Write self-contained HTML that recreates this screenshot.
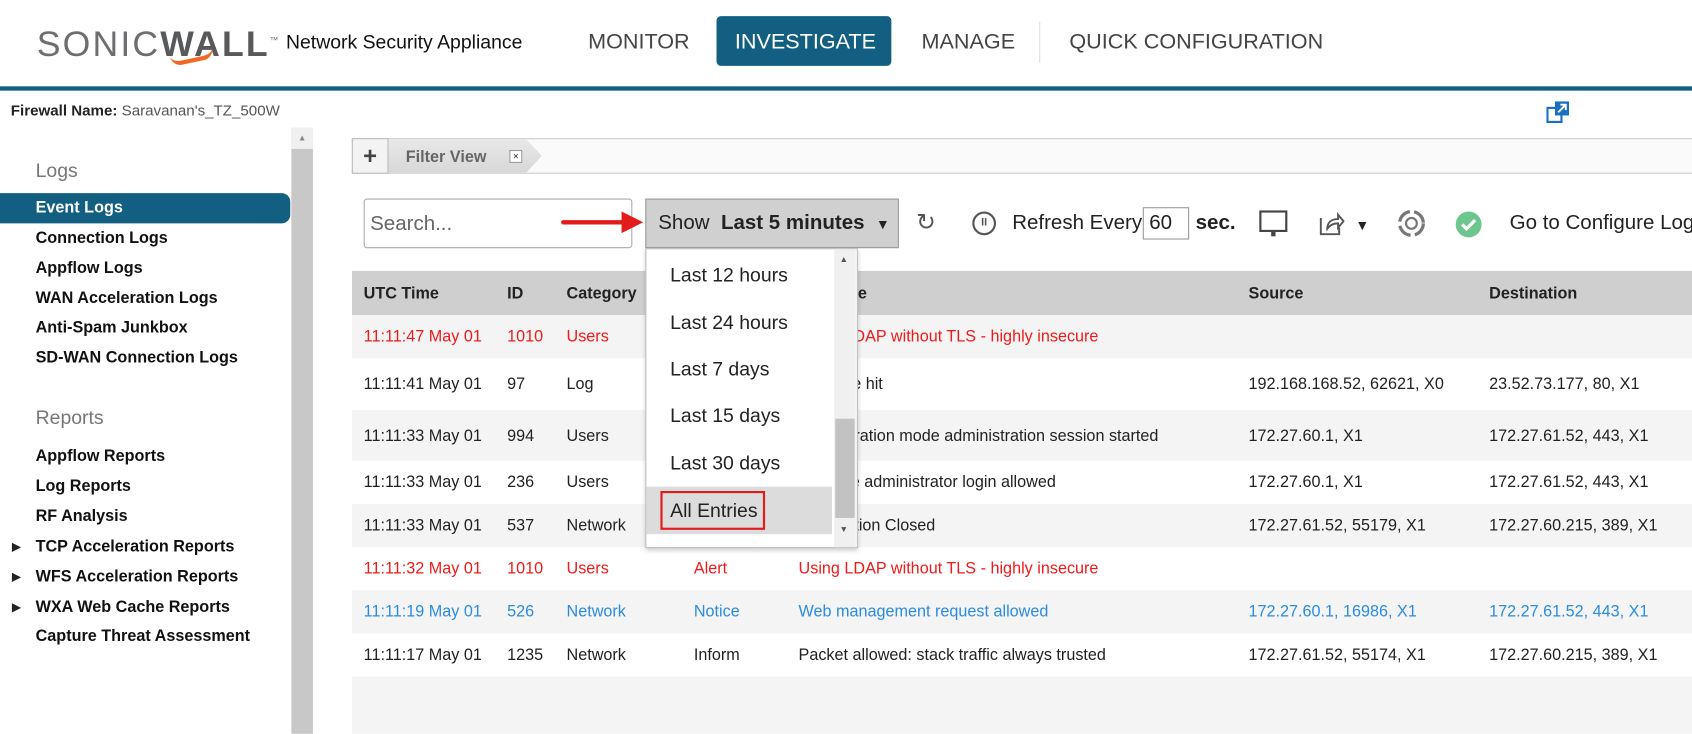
<!DOCTYPE html>
<html><head><meta charset="utf-8"><style>
*{margin:0;padding:0;box-sizing:border-box}
html,body{width:1692px;height:680px;overflow:hidden;background:#fff}
#w{position:absolute;left:0;top:0;width:1568px;height:631px;transform:scale(1.0791);transform-origin:0 0;font-family:"Liberation Sans",sans-serif;color:#222}
.a{position:absolute;white-space:nowrap}
.nav{font-size:20px;color:#444;top:28px}
.side{font-size:15px;font-weight:bold;left:33px;color:#111}
.row{position:absolute;left:326px;width:1242px;font-size:15px}
.row span{position:absolute;top:50%;transform:translateY(-50%);white-space:nowrap}
.red{color:#f01a1a}.blue{color:#2b8ce0}
.dd{font-size:18px;left:621px;color:#222}
</style></head><body><div id="w">
<div class="a" style="left:34px;top:22px;font-size:33px;letter-spacing:2px;color:#6d6e70">SONIC<b style="color:#58595b">WALL</b><sup style="font-size:8px">™</sup></div>
<div class="a" style="left:158px;top:48px;width:40px;height:10px;border-bottom:4px solid #f26722;border-radius:0 0 30px 30px;transform:rotate(-12deg)"></div>
<div class="a" style="left:265px;top:29px;font-size:18px;color:#111">Network Security Appliance</div>
<div class="a nav" style="left:545px">MONITOR</div>
<div class="a" style="left:664px;top:15px;width:162px;height:46px;background:#135f82;border-radius:4px"></div>
<div class="a nav" style="left:681px;color:#fff">INVESTIGATE</div>
<div class="a nav" style="left:854px">MANAGE</div>
<div class="a" style="left:963px;top:20px;width:1px;height:38px;background:#ddd"></div>
<div class="a nav" style="left:991px">QUICK CONFIGURATION</div>
<div class="a" style="left:0;top:80px;width:1568px;height:4px;background:#135f82"></div>
<div class="a" style="left:10px;top:94px;font-size:14px"><b>Firewall Name:</b> <span style="color:#555">Saravanan's_TZ_500W</span></div>
<svg class="a" style="left:1433px;top:93px" width="22" height="22" viewBox="0 0 22 22"><rect x="1" y="7" width="13" height="13" fill="none" stroke="#1a6fc4" stroke-width="2"/><rect x="8" y="1" width="13" height="13" fill="#1a6fc4"/><path d="M11 11l7-7M13 4h5v5" stroke="#fff" stroke-width="1.8" fill="none"/></svg>
<div class="a" style="left:270px;top:118px;width:20px;height:562px;background:#c8c8c8"></div>
<div class="a" style="left:270px;top:118px;width:20px;height:20px;background:#f0f0f0;font-size:8px;color:#888;text-align:center;line-height:20px">▲</div>
<div class="a" style="left:33px;top:148px;font-size:18px;color:#777">Logs</div>
<div class="a" style="left:0;top:179px;width:269px;height:28px;background:#135f82;border-radius:0 8px 8px 0"></div>
<div class="a side" style="top:184px;color:#fff">Event Logs</div>
<div class="a side" style="top:212px">Connection Logs</div>
<div class="a side" style="top:240px">Appflow Logs</div>
<div class="a side" style="top:268px">WAN Acceleration Logs</div>
<div class="a side" style="top:295px">Anti-Spam Junkbox</div>
<div class="a side" style="top:323px">SD-WAN Connection Logs</div>
<div class="a" style="left:33px;top:377px;font-size:18px;color:#777">Reports</div>
<div class="a side" style="top:414px">Appflow Reports</div>
<div class="a side" style="top:442px">Log Reports</div>
<div class="a side" style="top:470px">RF Analysis</div>
<div class="a side" style="top:498px">TCP Acceleration Reports</div>
<div class="a side" style="top:526px">WFS Acceleration Reports</div>
<div class="a side" style="top:554px">WXA Web Cache Reports</div>
<div class="a side" style="top:581px">Capture Threat Assessment</div>
<div class="a" style="left:11px;top:500px;font-size:11px">▶</div>
<div class="a" style="left:11px;top:528px;font-size:11px">▶</div>
<div class="a" style="left:11px;top:556px;font-size:11px">▶</div>
<div class="a" style="left:326px;top:128px;width:1242px;height:33px;border:1px solid #ccc;border-right:none;background:#fafafa"></div>
<div class="a" style="left:326px;top:128px;width:34px;height:33px;border:1px solid #bbb;background:#f3f3f3;text-align:center;font-size:22px;font-weight:bold;line-height:31px;color:#444">+</div>
<div class="a" style="left:360px;top:129px;width:142px;height:31px;background:linear-gradient(#e8e8e8,#d8d8d8);clip-path:polygon(0 0,90% 0,100% 50%,90% 100%,0 100%)"></div>
<div class="a" style="left:376px;top:137px;font-size:15px;font-weight:bold;color:#666">Filter View</div>
<div class="a" style="left:472px;top:139px;width:12px;height:12px;border:1px solid #999;background:#fff;font-size:9px;line-height:10px;text-align:center">×</div>
<div class="a" style="left:337px;top:184px;width:249px;height:46px;border:1px solid #aaa;border-radius:3px"></div>
<div class="a" style="left:343px;top:197px;font-size:19px;color:#666">Search...</div>
<div class="a" style="left:520px;top:204px;width:60px;height:4px;background:#e41b1b;border-radius:2px"></div>
<div class="a" style="left:576px;top:196px;width:0;height:0;border-left:20px solid #e41b1b;border-top:10px solid transparent;border-bottom:10px solid transparent"></div>
<div class="a" style="left:598px;top:184px;width:235px;height:46px;background:#d0d0d0;border:1px solid #999"></div>
<div class="a" style="left:610px;top:196px;font-size:19px;color:#222">Show&nbsp; <b>Last 5 minutes</b>&nbsp; <span style="font-size:13px">▼</span></div>
<div class="a" style="left:849px;top:193px;font-size:22px;color:#555">↻</div>
<div class="a" style="left:901px;top:196px;width:22px;height:22px;border:2px solid #555;border-radius:50%;font-size:10px;text-align:center;line-height:18px;color:#555;font-weight:bold">II</div>
<div class="a" style="left:938px;top:196px;font-size:19px">Refresh Every</div>
<div class="a" style="left:1059px;top:192px;width:43px;height:30px;border:1px solid #999;font-size:19px;padding:3px 5px">60</div>
<div class="a" style="left:1108px;top:196px;font-size:19px;font-weight:bold">sec.</div>
<svg class="a" style="left:1166px;top:194px" width="28" height="28"><rect x="2" y="2" width="24" height="18" fill="none" stroke="#444" stroke-width="2"/><rect x="12" y="20" width="4" height="5" fill="#444"/></svg>
<svg class="a" style="left:1220px;top:194px" width="26" height="26"><path d="M4 8v15h17v-6M10 18c0-6 4-9 10-9V5l5 6-5 6v-4c-4 0-7 1-10 5z" fill="none" stroke="#555" stroke-width="1.8"/></svg>
<div class="a" style="left:1256px;top:201px;font-size:13px">▼</div>
<svg class="a" style="left:1294px;top:193px" width="28" height="28"><circle cx="14" cy="14" r="11" fill="none" stroke="#777" stroke-width="3" stroke-dasharray="14 4"/><circle cx="14" cy="14" r="5" fill="none" stroke="#777" stroke-width="2"/></svg>
<svg class="a" style="left:1348px;top:195px" width="26" height="26"><circle cx="13" cy="13" r="12" fill="#6cc68d"/><path d="M7 13l4 4 8-8" stroke="#fff" stroke-width="3" fill="none"/></svg>
<div class="a" style="left:1399px;top:196px;font-size:19px">Go to Configure Log</div>
<div class="row" style="top:251px;height:41px;background:#cfcfcf;font-weight:bold">
<span style="left:11px">UTC Time</span><span style="left:144px">ID</span><span style="left:199px">Category</span><span style="left:414px">Message</span><span style="left:831px">Source</span><span style="left:1054px">Destination</span></div>
<div class="row red" style="top:292px;height:40px;background:#f4f4f4"><span style="left:11px">11:11:47 May 01</span><span style="left:144px">1010</span><span style="left:199px">Users</span><span style="left:414px">Using LDAP without TLS - highly insecure</span></div>
<div class="row" style="top:332px;height:48px"><span style="left:11px">11:11:41 May 01</span><span style="left:144px">97</span><span style="left:199px">Log</span><span style="left:414px">Web site hit</span><span style="left:831px">192.168.168.52, 62621, X0</span><span style="left:1054px">23.52.73.177, 80, X1</span></div>
<div class="row" style="top:380px;height:47px;background:#f4f4f4"><span style="left:11px">11:11:33 May 01</span><span style="left:144px">994</span><span style="left:199px">Users</span><span style="left:414px">Configuration mode administration session started</span><span style="left:831px">172.27.60.1, X1</span><span style="left:1054px">172.27.61.52, 443, X1</span></div>
<div class="row" style="top:427px;height:40px"><span style="left:11px">11:11:33 May 01</span><span style="left:144px">236</span><span style="left:199px">Users</span><span style="left:414px">Machine administrator login allowed</span><span style="left:831px">172.27.60.1, X1</span><span style="left:1054px">172.27.61.52, 443, X1</span></div>
<div class="row" style="top:467px;height:40px;background:#f4f4f4"><span style="left:11px">11:11:33 May 01</span><span style="left:144px">537</span><span style="left:199px">Network</span><span style="left:414px">Connection Closed</span><span style="left:831px">172.27.61.52, 55179, X1</span><span style="left:1054px">172.27.60.215, 389, X1</span></div>
<div class="row red" style="top:507px;height:40px"><span style="left:11px">11:11:32 May 01</span><span style="left:144px">1010</span><span style="left:199px">Users</span><span style="left:317px">Alert</span><span style="left:414px">Using LDAP without TLS - highly insecure</span></div>
<div class="row blue" style="top:547px;height:40px;background:#f4f4f4"><span style="left:11px">11:11:19 May 01</span><span style="left:144px">526</span><span style="left:199px">Network</span><span style="left:317px">Notice</span><span style="left:414px">Web management request allowed</span><span style="left:831px">172.27.60.1, 16986, X1</span><span style="left:1054px">172.27.61.52, 443, X1</span></div>
<div class="row" style="top:587px;height:40px"><span style="left:11px">11:11:17 May 01</span><span style="left:144px">1235</span><span style="left:199px">Network</span><span style="left:317px">Inform</span><span style="left:414px">Packet allowed: stack traffic always trusted</span><span style="left:831px">172.27.61.52, 55174, X1</span><span style="left:1054px">172.27.60.215, 389, X1</span></div>
<div class="row" style="top:627px;height:53px;background:#f4f4f4"></div>
<div class="a" style="left:598px;top:230px;width:197px;height:278px;background:#fff;border:1px solid #bbb;box-shadow:0 2px 4px rgba(0,0,0,.2)"></div>
<div class="a" style="left:773px;top:231px;width:20px;height:276px;background:#f0f0f0"></div>
<div class="a" style="left:774px;top:388px;width:18px;height:92px;background:#c2c2c2"></div>
<div class="a" style="left:778px;top:236px;font-size:8px;color:#555">▲</div>
<div class="a" style="left:778px;top:486px;font-size:8px;color:#555">▼</div>
<div class="a dd" style="top:245px">Last 12 hours</div>
<div class="a dd" style="top:289px">Last 24 hours</div>
<div class="a dd" style="top:332px">Last 7 days</div>
<div class="a dd" style="top:375px">Last 15 days</div>
<div class="a dd" style="top:419px">Last 30 days</div>
<div class="a" style="left:599px;top:451px;width:172px;height:44px;background:#dcdcdc"></div>
<div class="a" style="left:612px;top:455px;width:97px;height:36px;border:2px solid #e41b1b"></div>
<div class="a dd" style="top:463px">All Entries</div>
</div></body></html>
